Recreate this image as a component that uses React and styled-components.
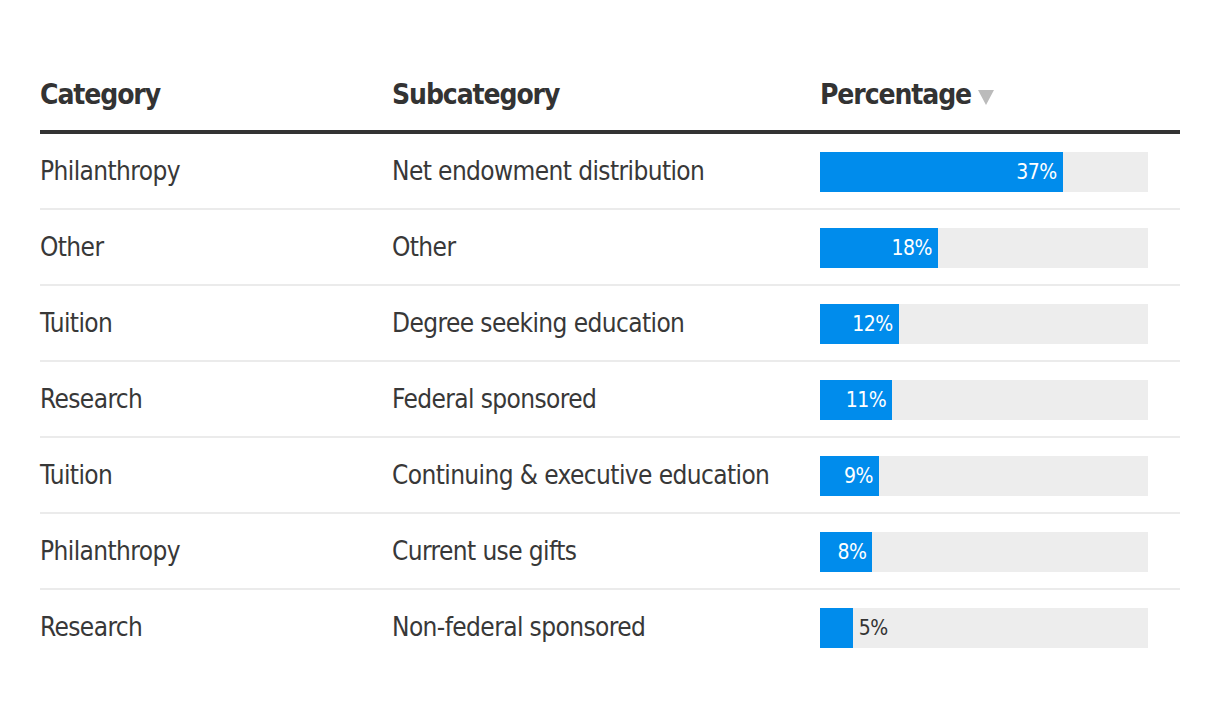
import React from 'react';
import styled, { createGlobalStyle } from 'styled-components';

const GlobalStyle = createGlobalStyle`
  body {
    margin: 0;
    background: #fff;
    font-family: "Liberation Sans Narrow", "DejaVu Sans Condensed", "Liberation Sans", sans-serif;
    color: #333;
  }
`;

const rows = [
  { category: 'Philanthropy', sub: 'Net endowment distribution', pct: 37 },
  { category: 'Other', sub: 'Other', pct: 18 },
  { category: 'Tuition', sub: 'Degree seeking education', pct: 12 },
  { category: 'Research', sub: 'Federal sponsored', pct: 11 },
  { category: 'Tuition', sub: 'Continuing & executive education', pct: 9 },
  { category: 'Philanthropy', sub: 'Current use gifts', pct: 8 },
  { category: 'Research', sub: 'Non-federal sponsored', pct: 5 },
];

// bar scale runs from 0 to 50%
const MAX = 50;

const Page = styled.div`
  padding: 70px 40px 0;
`;

const Table = styled.div`
  width: 1140px;
`;

const HeadRow = styled.div`
  display: grid;
  grid-template-columns: 352px 428px 1fr;
  align-items: end;
  padding-bottom: 10px;
  border-bottom: 4px solid #333;
`;

const HeadCell = styled.div`
  font-size: 28px;
  font-weight: 700;
  letter-spacing: -1.1px;
  line-height: 50px;
  display: flex;
  align-items: center;
  gap: 7px;
  white-space: nowrap;
`;

const SortArrow = styled.span`
  width: 0;
  height: 0;
  border-left: 8px solid transparent;
  border-right: 8px solid transparent;
  border-top: 15px solid #bbb;
  margin-top: 4px;
`;

const Row = styled.div`
  display: grid;
  grid-template-columns: 352px 428px 1fr;
  align-items: center;
  height: 74px;
  border-bottom: 2px solid #ebebeb;
  &:last-child {
    border-bottom: none;
  }
`;

const Cell = styled.div`
  font-size: 26px;
  letter-spacing: -0.6px;
  font-weight: 400;
  color: #383838;
  white-space: nowrap;
  padding-bottom: 1px;
`;

const Track = styled.div`
  width: 328px;
  height: 40px;
  margin-top: 2px;
  background: #ededed;
  display: flex;
  align-items: center;
`;

const Fill = styled.div`
  height: 100%;
  background: #008cec;
  display: flex;
  align-items: center;
  justify-content: flex-end;
`;

const Label = styled.span`
  font-size: 21px;
  letter-spacing: -0.5px;
  color: ${p => (p.$inside ? '#fff' : '#333')};
  padding: ${p => (p.$inside ? '0 6px 0 0' : '0 0 0 6px')};
`;

export default function App() {
  return (
    <Page>
      <GlobalStyle />
      <Table>
        <HeadRow>
          <HeadCell>Category</HeadCell>
          <HeadCell>Subcategory</HeadCell>
          <HeadCell>
            Percentage <SortArrow />
          </HeadCell>
        </HeadRow>
        {rows.map((r, i) => {
          const inside = r.pct >= 8;
          return (
            <Row key={i}>
              <Cell>{r.category}</Cell>
              <Cell>{r.sub}</Cell>
              <Track>
                <Fill style={{ width: `${(r.pct / MAX) * 100}%` }}>
                  {inside && <Label $inside>{r.pct}%</Label>}
                </Fill>
                {!inside && <Label>{r.pct}%</Label>}
              </Track>
            </Row>
          );
        })}
      </Table>
    </Page>
  );
}
